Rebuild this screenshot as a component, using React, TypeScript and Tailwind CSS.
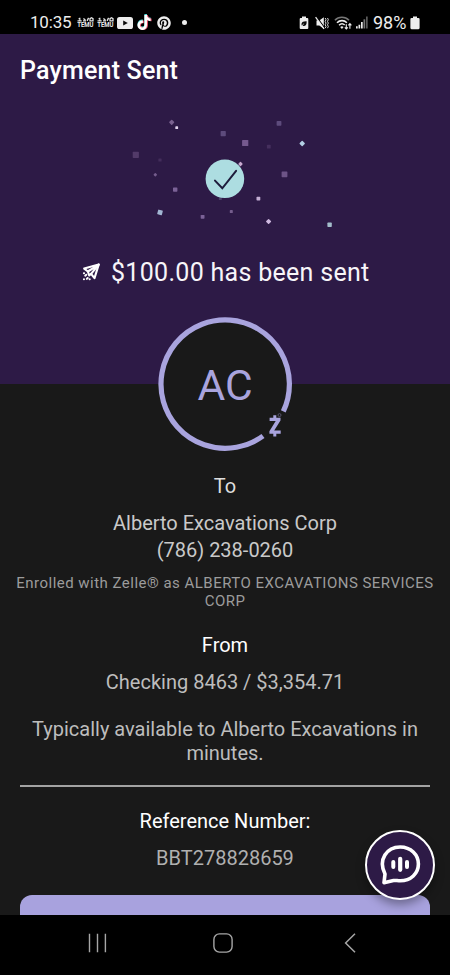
import { FaTiktok, FaPinterest } from 'react-icons/fa6'

type Bit = { x: number; y: number; s: number; fill: string; rot?: number }

const confetti: Bit[] = [
  { x: 51.7, y: 22.3, s: 4, fill: '#79618f', rot: 45 },
  { x: 56.7, y: 27.7, s: 2.8, fill: '#e3d5ee' },
  { x: 103.2, y: 33.7, s: 5.2, fill: '#5d4b7c' },
  { x: 159, y: 23.4, s: 4.8, fill: '#5d4b7c' },
  { x: 125.2, y: 43, s: 6.2, fill: '#75598e' },
  { x: 148.8, y: 46.7, s: 3.8, fill: '#452f5d' },
  { x: 182.2, y: 43.5, s: 4.2, fill: '#b3cfe4', rot: 45 },
  { x: 15.8, y: 54.8, s: 6.2, fill: '#523a69' },
  { x: 40, y: 60, s: 3.2, fill: '#432d5b' },
  { x: 35.3, y: 74.8, s: 2.8, fill: '#755d8d', rot: 45 },
  { x: 164.5, y: 74.3, s: 5.8, fill: '#6d5487' },
  { x: 55.2, y: 89.6, s: 4.4, fill: '#7b6297' },
  { x: 138.4, y: 98.6, s: 3.8, fill: '#c4aed4' },
  { x: 100.3, y: 98.6, s: 3, fill: '#4b4168' },
  { x: 40, y: 112.4, s: 4.8, fill: '#a1b5d2', rot: 15 },
  { x: 82.6, y: 116.8, s: 3.8, fill: '#7b6297' },
  { x: 111.3, y: 111.6, s: 3, fill: '#755d8d' },
  { x: 148.6, y: 121.5, s: 4, fill: '#cfb9e0', rot: 45 },
  { x: 209.6, y: 124.7, s: 4.4, fill: '#a3bdcb' },
  { x: 120.5, y: 64, s: 3.4, fill: '#c7a9cf', rot: 45 },
]

function Temu() {
  return (
    <svg width="17" height="14" viewBox="0 0 17 14" className="shrink-0">
      <path
        d="M.5 4.900h4.200M1.600 2.500l1.600.8M2.800 1.800v2.400M6 4.900h3M6.400 2.400l2 1.600M10.100 4.900l1.500-3M13 4.800V2.700l1.500-.9 1.500.9v2.100z"
        stroke="#e4e4e4"
        strokeWidth="1.300"
        fill="none"
      />
      <text
        x="0.2"
        y="11.200"
        textLength="16.200"
        lengthAdjust="spacingAndGlyphs"
        fill="#ededed"
        className="font-['Roboto',sans-serif] text-[6.500px] font-bold"
      >
        TEMU
      </text>
    </svg>
  )
}

function StatusBar() {
  return (
    <header className="flex h-[34px] items-center bg-black pt-[11px] pl-[30px] pr-[30px] text-[#ededed]">
      <span className="-mt-px w-[47px] text-[17px] leading-[24px] tracking-[-0.2px]">10:35</span>
      <div className="flex items-center">
        <Temu />
        <span className="w-[3px]" />
        <Temu />
        <svg width="16" height="12" viewBox="0 0 16 12" className="ml-[2.5px]">
          <rect width="16" height="12" rx="2.6" fill="#ededed" />
          <path d="M6.2 3.5v5L10.8 6z" fill="#0a0a0a" />
        </svg>
        <span className="relative ml-[4.5px] block h-4 w-[14px]">
          <FaTiktok className="absolute -left-[0.5px] -top-[0.3px] h-[15px] w-[14px] text-[#4fd8d8]" />
          <FaTiktok className="absolute left-[0.5px] top-[0.3px] h-[15px] w-[14px] text-[#e8506f]" />
          <FaTiktok className="absolute left-0 top-0 h-[15px] w-[14px] text-white" />
        </span>
        <FaPinterest className="ml-[5.5px] size-[14px]" />
        <span className="ml-[11.5px] size-[5px] rounded-full bg-[#ededed]" />
      </div>
      <div className="ml-auto flex items-center">
        <svg width="10" height="14" viewBox="0 0 10 14">
          <path d="M3 .6h4v1.5h1.3a1 1 0 0 1 1 1v9a1 1 0 0 1-1 1H1.700a1 1 0 0 1-1-1v-9a1 1 0 0 1 1-1H3z" fill="#ededed" />
          <path d="M7.600 5.200C4 5.100 2.300 6.200 2.500 8.600c.1.500.3.900.6 1.100.5-1.400 1.300-2.100 2.600-2.600-.9.700-1.500 1.500-1.800 2.800 2.900.3 4-1.300 3.700-4.700z" fill="#0a0a0a" />
        </svg>
        <svg width="14" height="14" viewBox="0 0 14 14" className="ml-[5.500px]">
          <path d="M1.500 4.500h2.800L8.800 1.300v11.400L4.300 9.500H1.500z" fill="#ededed" />
          <path d="M1.400.5 9.800 12" stroke="#000" strokeWidth="1.200" />
          <path d="M.6 1.200 9 12.900" stroke="#ededed" strokeWidth="1.200" />
          <path d="M10.200 2l.8 1.700-.8 1.700.8 1.700-.8 1.700.8 1.700-.8 1.700M12.500 2l.8 1.700-.8 1.700.8 1.700-.8 1.700.8 1.700-.8 1.700" stroke="#dcdcdc" strokeWidth="1" fill="none" />
        </svg>
        <svg width="18" height="14" viewBox="0 0 18 14" fill="none" className="ml-[5px]">
          <path d="M.9 4.300C4.600.3 11.200.3 15 4.300" stroke="#777" strokeWidth="1.500" />
          <path d="M3 6.800c2.800-2.900 7.200-2.900 9.900-.1M5.100 9.200c1.700-1.700 4-1.700 5.600-.2" stroke="#ededed" strokeWidth="1.600" />
          <path d="M7.900 13 6.200 11.100a2.400 2.400 0 0 1 3.400 0z" fill="#ededed" />
          <path d="M12.300 8.200v4.600M10.800 11.300l1.500 1.700 1.500-1.700M15.900 12.700V8M14.400 9.400l1.500-1.700 1.500 1.700" stroke="#ededed" strokeWidth="1.100" />
        </svg>
        <svg width="12" height="13" viewBox="0 0 12 13" className="ml-1">
          <path d="M0 10.300h1.700V12.500H0zM2.500 8.700h1.700v3.800H2.500zM5 6h1.700v6.500H5z" fill="#ededed" />
          <path d="M7.500 3.300h1.700v9.200H7.500z" fill="#777" />
          <path d="M10 .6h1.700v11.900H10z" fill="#5c5c5c" />
        </svg>
        <span className="ml-[5.500px] w-[37px] text-[18px] leading-[24px]">98%</span>
        <svg width="10" height="14" viewBox="0 0 10 14">
          <path d="M3 .6h4v1.500h1.500a1.100 1.100 0 0 1 1.100 1.100v8.900a1.100 1.100 0 0 1-1.100 1.100h-7A1.100 1.100 0 0 1 .4 12.100V3.200a1.100 1.100 0 0 1 1.100-1.100H3z" fill="#ededed" />
        </svg>
      </div>
    </header>
  )
}

function SuccessArt() {
  return (
    <svg width="230" height="140" viewBox="0 0 230 140" className="mt-[14px] ml-[120px] block">
      {confetti.map((c, i) => (
        <rect
          key={i}
          x={c.x - c.s / 2}
          y={c.y - c.s / 2}
          width={c.s}
          height={c.s}
          rx="0.7"
          fill={c.fill}
          transform={c.rot ? `rotate(${c.rot} ${c.x} ${c.y})` : undefined}
        />
      ))}
      <circle cx="104.900" cy="78.800" r="19.300" fill="#addde1" />
      <path d="M95 80.600l7.300 7.700 13.800-17.400" fill="none" stroke="#1e1c3c" strokeWidth="2" strokeLinecap="round" />
    </svg>
  )
}

function SendIcon() {
  return (
    <svg
      width="18"
      height="18"
      viewBox="0 0 18 18"
      fill="none"
      stroke="#fff"
      strokeWidth="2.100"
      strokeLinejoin="round"
      strokeLinecap="round"
      className="-mt-[3px]"
    >
      <path d="M16.700 1.600 2.200 5.600l3.700 2.900 1.300 4 1.900-1.700 3.400 4.300z" />
      <path d="M16.700 1.600 5.900 8.500M16.700 1.600 9.100 10.800" />
      <path d="M1.900 10.300h.2M4.300 11.700 3.200 12.700M1.900 16.200h.1M4.800 15.900l.9-.9M7.600 16.200h.1" strokeWidth="2" />
    </svg>
  )
}

function Avatar() {
  return (
    <div className="mx-auto -mt-[67px] grid h-[134px] w-[134px] place-items-center">
      <svg width="134" height="135" viewBox="0 -0.500 134 135" className="col-start-1 row-start-1 -mb-px">
        <circle cx="67" cy="67" r="66" fill="#191919" />
        <path d="M105 118.500A64.200 64.200 0 1 1 125.300 93.900" fill="none" stroke="#a9a4de" strokeWidth="5.200" />
        {/* zelle mark */}
        <path
          d="M111.600 100.300h10.900v2.600l-6.300 10.100h6.500v3.300h-11.300v-2.600l6.300-10.100h-6.100zM115.300 97.800h3v3h-3zM115.300 115.800h3v3.200h-3z"
          fill="#a9a4de"
        />
        <circle cx="121.500" cy="97.600" r="1.500" fill="none" stroke="#605d7c" strokeWidth="0.800" />
      </svg>
      <span className="col-start-1 row-start-1 mt-[4px] text-[42.500px] leading-[50px] tracking-[-0.2px] text-[#a9a4de]">
        AC
      </span>
    </div>
  )
}

function ChatButton() {
  return (
    <button
      aria-label="Chat"
      className="absolute top-[830px] left-[364.500px] grid size-[70px] place-items-center rounded-full border-[2.500px] border-white bg-[#2d1a46] shadow-[0_5px_10px_rgba(0,0,0,0.35)]"
    >
      <svg width="44" height="44" viewBox="0 0 44 44" fill="none" stroke="#fff" strokeLinecap="round" strokeLinejoin="round">
        <path
          d="M7 31C-.3 16.500 9 4 22.200 4c10.600 0 18.200 7.800 18.200 17 0 9.500-7.600 16.800-18.200 16.800-2.800 0-4.800-.6-6.700-.3L6 39.700z"
          strokeWidth="3.600"
        />
        <path d="M15.300 18.900v5M29 18.900v5" strokeWidth="4" />
        <path d="M22.200 15.800v11" strokeWidth="4.200" />
      </svg>
    </button>
  )
}

function NavBar() {
  return (
    <nav className="flex h-[60px] items-center bg-black pl-[87px]">
      <svg width="20" height="20" viewBox="0 0 20 20" className="mb-[4px]">
        <path d="M2.500.7v18.600M10.500.7v18.600M18.400.7v18.600" stroke="#a6a6a6" strokeWidth="1.400" />
      </svg>
      <svg width="20" height="20" viewBox="0 0 20 20" className="mb-[4px] ml-[106px]">
        <rect x="0.900" y="0.900" width="18.200" height="18.200" rx="5.500" fill="none" stroke="#a6a6a6" strokeWidth="1.400" />
      </svg>
      <svg width="12" height="20" viewBox="0 0 12 20" className="mb-[4px] ml-[110.500px]">
        <path d="M11 .7 1.600 10 11 19.300" fill="none" stroke="#a6a6a6" strokeWidth="1.500" />
      </svg>
    </nav>
  )
}

export default function App() {
  return (
    <div className="relative flex h-[975px] w-[450px] flex-col overflow-hidden bg-[#191919] font-['Roboto',sans-serif]">
      <StatusBar />
      <main className="h-[881px] overflow-hidden">
        <section className="h-[350px] bg-[#2d1a46] pt-[22px]">
          <h1 className="pl-5 text-[25px] leading-[30px] font-medium tracking-[0.2px] text-white">Payment Sent</h1>
          <SuccessArt />
          <div className="mt-[18px] flex items-center pl-[82px]">
            <SendIcon />
            <p className="ml-[11px] text-[25px] leading-[30px] tracking-[0.3px] whitespace-nowrap text-[#f7f5f9]">
              $100.00 has been sent
            </p>
          </div>
        </section>

        <Avatar />

        <section className="mt-[23px] text-center text-xl leading-6 text-[#c9c9c9]">
          <h2 className="text-[#dedede]">To</h2>
          <p className="mt-[12px] leading-[27px]">Alberto Excavations Corp</p>
          <p className="leading-[27px]">(786) 238-0260</p>
          <p className="mt-[11px] text-[15px] leading-[17.600px] tracking-[0.48px] text-[#9c9c9c]">
            Enrolled with Zelle® as ALBERTO EXCAVATIONS SERVICES
            <br />
            CORP
          </p>
          <h2 className="mt-[22.800px] text-white">From</h2>
          <p className="mt-[13px] text-[#bdbdbd]">Checking 8463 / $3,354.71</p>
          <p className="mt-[24px] leading-[23.800px] text-[#bdbdbd]">
            Typically available to Alberto Excavations in
            <br />
            minutes.
          </p>
          <div className="mx-5 mt-[19.400px] h-[2px] bg-[#a3a3a3]" />
          <h2 className="mt-[22px] text-white">Reference Number:</h2>
          <p className="mt-[13px] text-[#b0b0b0]">BBT278828659</p>
        </section>
        <div className="mx-5 mt-[25px] h-[48px] rounded-xl bg-[#a8a2de]" />
      </main>
      <NavBar />
      <ChatButton />
    </div>
  )
}
